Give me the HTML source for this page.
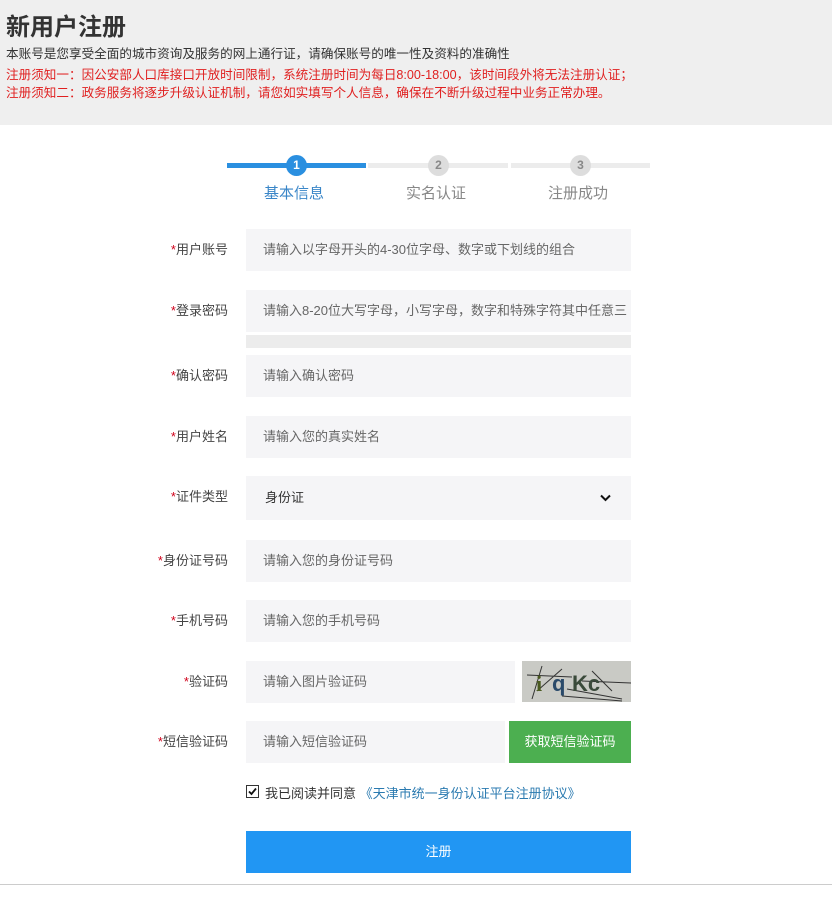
<!DOCTYPE html>
<html><head><meta charset="utf-8"><style>
*{margin:0;padding:0;box-sizing:border-box}
body{width:832px;height:898px;background:#fff;font-family:"Liberation Sans","Noto Sans CJK SC",sans-serif;position:relative;overflow:hidden}
.top{position:absolute;left:0;top:0;width:832px;height:125px;background:#efefef}
.panel{position:absolute;left:7px;top:125px;width:825px;height:759px;background:#fff}
.bot{position:absolute;left:0;top:884px;width:832px;height:1px;background:#ccc}
.a{position:absolute;white-space:nowrap}
h1{position:absolute;left:6px;top:13px;font-size:24px;font-weight:bold;color:#333;line-height:30px}
.lab{position:absolute;right:604px;font-size:13px;color:#444;text-align:right}
.lab b{color:#d0021b;font-weight:normal}
.in{position:absolute;left:246px;width:385px;height:42px;background:#f5f5f7;font-size:13px;color:#666;padding-left:17px;line-height:42px}
</style></head><body>
<div class="top"></div>
<h1>新用户注册</h1>
<div class="a" style="left:6px;top:43px;font-size:12.6px;color:#333">本账号是您享受全面的城市资询及服务的网上通行证，请确保账号的唯一性及资料的准确性</div>
<div class="a" style="left:6px;top:64px;font-size:12.6px;color:#e02020">注册须知一：因公安部人口库接口开放时间限制，系统注册时间为每日8:00-18:00，该时间段外将无法注册认证；</div>
<div class="a" style="left:6px;top:82px;font-size:12.6px;color:#e02020">注册须知二：政务服务将逐步升级认证机制，请您如实填写个人信息，确保在不断升级过程中业务正常办理。</div>
<div class="panel"></div>
<div class="bot"></div>
<div class="a" style="left:227px;top:163px;width:139px;height:5px;background:#2a8fe0"></div>
<div class="a" style="left:368px;top:163px;width:140px;height:5px;background:#ececec"></div>
<div class="a" style="left:511px;top:163px;width:139px;height:5px;background:#ececec"></div>
<div class="a" style="left:286px;top:155px;width:21px;height:21px;border-radius:50%;background:#2a8fe0;color:#fff;font-size:12px;font-weight:bold;text-align:center;line-height:21px">1</div>
<div class="a" style="left:428px;top:155px;width:21px;height:21px;border-radius:50%;background:#ddd;color:#888;font-size:12px;font-weight:bold;text-align:center;line-height:21px">2</div>
<div class="a" style="left:570px;top:155px;width:21px;height:21px;border-radius:50%;background:#ddd;color:#888;font-size:12px;font-weight:bold;text-align:center;line-height:21px">3</div>
<div class="a" style="left:264px;top:182px;font-size:15px;color:#3a86c8">基本信息</div>
<div class="a" style="left:406px;top:182px;font-size:15px;color:#888">实名认证</div>
<div class="a" style="left:548px;top:182px;font-size:15px;color:#888">注册成功</div>
<div class="lab" style="top:239px"><b>*</b>用户账号</div>
<div class="in" style="top:229px">请输入以字母开头的4-30位字母、数字或下划线的组合</div>
<div class="lab" style="top:300px"><b>*</b>登录密码</div>
<div class="in" style="top:290px;overflow:hidden">请输入8-20位大写字母，小写字母，数字和特殊字符其中任意三</div>
<div class="a" style="left:246px;top:335px;width:385px;height:13px;background:#ececec"></div>
<div class="lab" style="top:365px"><b>*</b>确认密码</div>
<div class="in" style="top:355px">请输入确认密码</div>
<div class="lab" style="top:426px"><b>*</b>用户姓名</div>
<div class="in" style="top:416px">请输入您的真实姓名</div>
<div class="lab" style="top:486px"><b>*</b>证件类型</div>
<div class="in" style="top:476px;height:44px;line-height:44px;color:#333;padding-left:19px">身份证
<svg style="position:absolute;right:20px;top:18px" width="11" height="8" viewBox="0 0 11 8"><path d="M1 1.5L5.5 6 10 1.5" stroke="#111" stroke-width="2" fill="none"/></svg></div>
<div class="lab" style="top:550px"><b>*</b>身份证号码</div>
<div class="in" style="top:540px">请输入您的身份证号码</div>
<div class="lab" style="top:610px"><b>*</b>手机号码</div>
<div class="in" style="top:600px">请输入您的手机号码</div>
<div class="lab" style="top:671px"><b>*</b>验证码</div>
<div class="in" style="top:661px;width:269px">请输入图片验证码</div>
<div class="a" style="left:522px;top:661px;width:109px;height:41px;background:#c9cac5;overflow:hidden">
<svg width="109" height="41"><path d="M5 14L50 16M20 5L10 38M15 30L40 8M40 35L100 40M45 28L100 38M70 10L90 30M60 20L109 22" stroke="#333" stroke-width="1" fill="none"/>
<text x="14" y="30" font-family="Liberation Serif" font-size="22" font-weight="bold" fill="#4a5a20">i</text>
<text x="30" y="30" font-family="Liberation Sans" font-size="22" font-weight="bold" fill="#2a4a6a">q</text>
<text x="50" y="30" font-family="Liberation Sans" font-size="22" font-weight="bold" fill="#3a4a3a">Kc</text></svg></div>
<div class="lab" style="top:731px"><b>*</b>短信验证码</div>
<div class="in" style="top:721px;width:259px">请输入短信验证码</div>
<div class="a" style="left:509px;top:721px;width:122px;height:42px;background:#4caf50;color:#fff;font-size:13px;text-align:center;line-height:42px">获取短信验证码</div>
<div class="a" style="left:246px;top:785px;width:13px;height:13px;border:1px solid #333;background:#fff">
<svg width="11" height="11" style="position:absolute;left:0;top:0"><path d="M2 5.5L4.5 8 9 2.5" stroke="#111" stroke-width="1.8" fill="none"/></svg></div>
<div class="a" style="left:265px;top:783px;font-size:13px;color:#333">我已阅读并同意 <span style="color:#2a7ab0">《天津市统一身份认证平台注册协议》</span></div>
<div class="a" style="left:246px;top:831px;width:385px;height:42px;background:#2196f3;color:#fff;font-size:13px;text-align:center;line-height:42px">注册</div>
</body></html>
